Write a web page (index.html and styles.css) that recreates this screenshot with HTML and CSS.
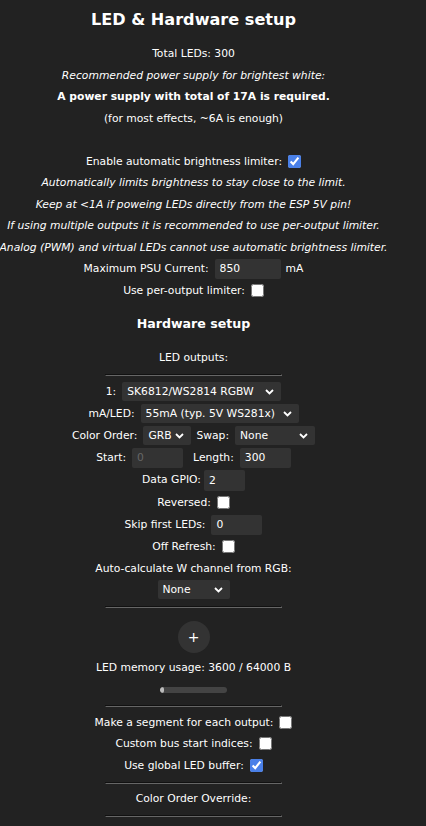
FILE: index.html
```html
<!DOCTYPE html>
<html>
<head>
<meta charset="utf-8">
<link rel="stylesheet" href="styles.css">
</head>
<body>
<div class="page">
  <h2 class="title">LED &amp; Hardware setup</h2>
  <div class="row">Total LEDs: 300</div>
  <div class="row"><i>Recommended power supply for brightest white:</i></div>
  <div class="row"><b>A power supply with total of 17A is required.</b></div>
  <div class="row">(for most effects, ~6A is enough)</div>
  <div class="row"></div>
  <div class="row"><label>Enable automatic brightness limiter:</label><input class="cb" type="checkbox" checked></div>
  <div class="row"><i>Automatically limits brightness to stay close to the limit.</i></div>
  <div class="row"><i>Keep at &lt;1A if poweing LEDs directly from the ESP 5V pin!</i></div>
  <div class="row"><i>If using multiple outputs it is recommended to use per-output limiter.</i></div>
  <div class="row"><i>Analog (PWM) and virtual LEDs cannot use automatic brightness limiter.</i></div>
  <div class="row"><label>Maximum PSU Current:</label><input class="txt w66" type="text" value="850"><span class="unit">mA</span></div>
  <div class="row"><label>Use per-output limiter:</label><input class="cb" type="checkbox"></div>

  <h3 class="sub">Hardware setup</h3>
  <div class="row">LED outputs:</div>
  <hr class="sml hr1">

  <div class="row r22"><label>1:</label><span class="sel w159"><select><option>SK6812/WS2814 RGBW</option></select><svg class="chev" width="9" height="6" viewBox="0 0 9 6"><path d="M1 1L4.5 4.5L8 1" fill="none" stroke="#fff" stroke-width="1.8"/></svg></span></div>
  <div class="row r22"><label>mA/LED:</label><span class="sel w158"><select><option>55mA (typ. 5V WS281x)</option></select><svg class="chev" width="9" height="6" viewBox="0 0 9 6"><path d="M1 1L4.5 4.5L8 1" fill="none" stroke="#fff" stroke-width="1.8"/></svg></span></div>
  <div class="row r22"><label>Color Order:</label><span class="sel w48 gapr"><select><option>GRB</option></select><svg class="chev" width="9" height="6" viewBox="0 0 9 6"><path d="M1 1L4.5 4.5L8 1" fill="none" stroke="#fff" stroke-width="1.8"/></svg></span><label>Swap:</label><span class="sel w80"><select><option>None</option></select><svg class="chev" width="9" height="6" viewBox="0 0 9 6"><path d="M1 1L4.5 4.5L8 1" fill="none" stroke="#fff" stroke-width="1.8"/></svg></span></div>
  <div class="row r22"><label>Start:</label><input class="txt w51 dis gapr2" type="text" value="0" disabled><label>Length:</label><input class="txt w51" type="text" value="300"></div>
  <div class="row r23"><label>Data GPIO:</label><input class="txt w41 tall" type="text" value="2" style="margin-left:3px"></div>
  <div class="row r22"><label>Reversed:</label><input class="cb" type="checkbox"></div>
  <div class="row r22"><label>Skip first LEDs:</label><input class="txt w51" type="text" value="0"></div>
  <div class="row r22"><label>Off Refresh:</label><input class="cb" type="checkbox"></div>
  <div class="row r22">Auto-calculate W channel from RGB:</div>
  <div class="row r20"><span class="sel w72 nom"><select><option>None</option></select><svg class="chev" width="9" height="6" viewBox="0 0 9 6"><path d="M1 1L4.5 4.5L8 1" fill="none" stroke="#fff" stroke-width="1.8"/></svg></span></div>
  <hr class="sml hr2">

  <button class="plus" type="button">+</button>
  <div class="row">LED memory usage: 3600 / 64000 B</div>
  <div class="bar"><div class="fill" style="width:5.6%"></div></div>
  <hr class="sml hr3">

  <div class="row"><label>Make a segment for each output:</label><input class="cb" type="checkbox"></div>
  <div class="row"><label>Custom bus start indices:</label><input class="cb" type="checkbox"></div>
  <div class="row"><label>Use global LED buffer:</label><input class="cb" type="checkbox" checked></div>
  <hr class="sml hr4">
  <div class="row r22">Color Order Override:</div>
  <hr class="sml hr5">
</div>
</body>
</html>
```

FILE: styles.css
```css
html, body {
  margin: 0;
  padding: 0;
  background: #222;
}
body {
  color: #fff;
  font-family: "DejaVu Sans", Verdana, sans-serif;
  font-size: 10.75px;
  line-height: 21.5px;
  overflow: hidden;
}
.page {
  width: 387px;
  display: flex;
  flex-direction: column;
  align-items: center;
}
.title {
  margin: 0 0 4px;
  font-size: 16.1px;
  line-height: 39px;
  font-weight: bold;
  white-space: nowrap;
}
.sub {
  margin: 0;
  font-size: 12.6px;
  line-height: 46px;
  font-weight: bold;
}
.row {
  height: 21.5px;
  display: flex;
  align-items: center;
  justify-content: center;
  white-space: nowrap;
}
.r20 { height: 20px; }
.r22 { height: 22px; }
.r23 { height: 23px; }
.cb {
  width: 13px;
  height: 13px;
  margin: 0 0 0 6px;
  accent-color: #4a80e8;
}
.txt {
  box-sizing: border-box;
  height: 20px;
  margin: 0 0 0 6px;
  padding: 0 5px;
  border: 0;
  border-radius: 2px;
  background: #333;
  color: #fff;
  font: inherit;
  line-height: 20px;
  outline: none;
}
.tall { height: 21px; }
.dis { color: #666; }
.w66 { width: 66px; }
.w51 { width: 51px; }
.w41 { width: 41px; }
.unit { margin-left: 5px; }
.gapr { margin-right: 5px; }
.gapr2 { margin-right: 10px; }
.sel {
  position: relative;
  display: inline-flex;
  margin-left: 6px;
  height: 19px;
}
.sel.nom { margin-left: 0; }
.sel select {
  -webkit-appearance: none;
  appearance: none;
  box-sizing: border-box;
  width: 100%;
  height: 19px;
  margin: 0;
  padding: 0 0 0 5px;
  border: 0;
  border-radius: 2px;
  background: #333;
  color: #fff;
  font: inherit;
  line-height: 19px;
  outline: none;
}
.chev {
  position: absolute;
  right: 7px;
  top: 7px;
  pointer-events: none;
}
.w159 { width: 159px; }
.w158 { width: 158px; }
.w48 { width: 48px; }
.w80 { width: 80px; }
.w72 { width: 72px; }
hr.sml {
  width: 175px;
  height: 0;
  border: 1px inset #666;
  box-sizing: content-box;
  padding: 0;
}
hr.sml.hr5, hr.sml.hr4, hr.sml.hr3, hr.sml.hr2, hr.sml.hr1 { align-self: center; }
.hr1 { margin: 5px 0 5px; }
.hr2 { margin: 6px 0 0; }
.hr3 { margin: 12px 0 5px; }
.hr4 { margin: 6px 0 4px; }
.hr5 { margin: 5px 0 0; }
.plus {
  width: 32px;
  height: 32px;
  margin: 13px 0 4px;
  padding: 0;
  border: 0;
  border-radius: 50%;
  background: #333;
  color: #fff;
  font-family: "DejaVu Sans", sans-serif;
  font-size: 14px;
  line-height: 32px;
}
.bar {
  width: 67px;
  height: 6px;
  margin-top: 8.5px;
  border-radius: 3px;
  background: #444;
  overflow: hidden;
}
.fill {
  height: 100%;
  background: #bbb;
  border-radius: 3px;
}
```
